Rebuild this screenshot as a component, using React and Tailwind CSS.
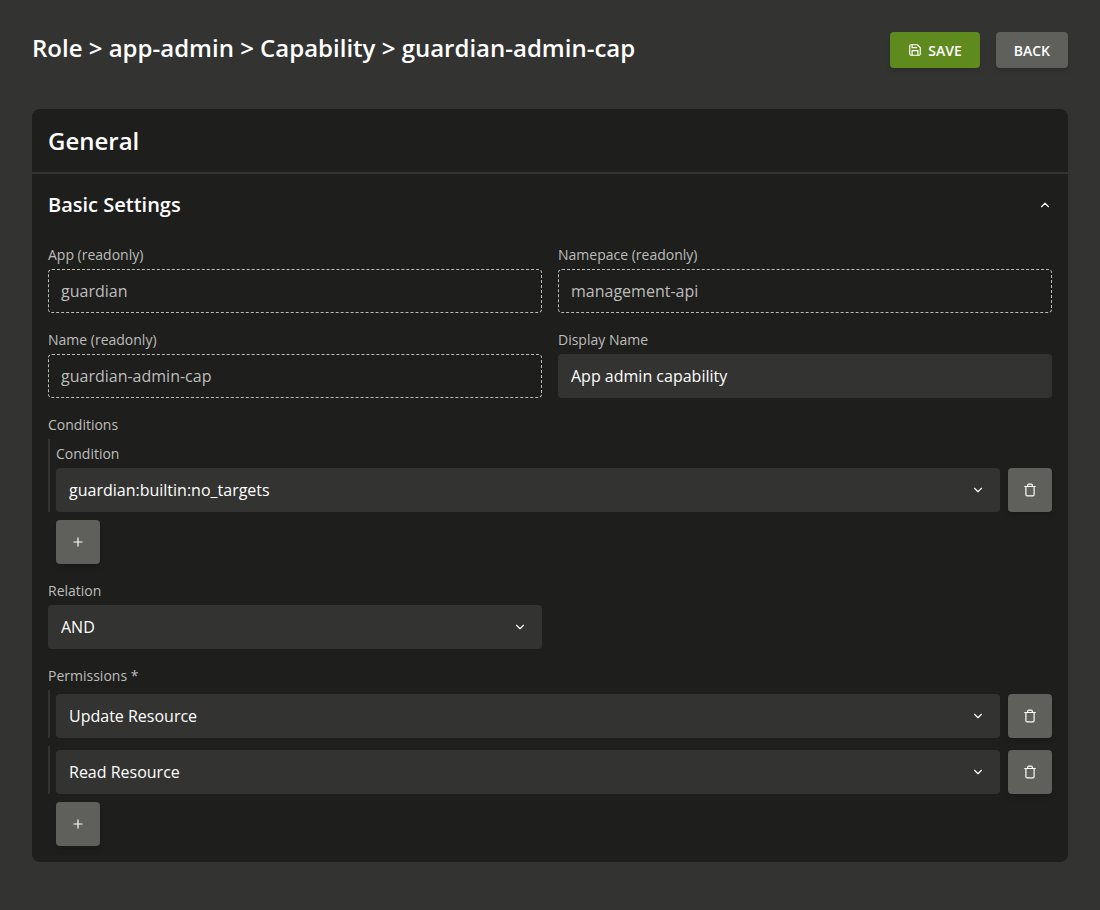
import React, { useState } from 'react';

function Icon({ children, className = '' }) {
  return (
    <svg
      viewBox="0 0 24 24"
      fill="none"
      stroke="currentColor"
      strokeWidth="2"
      strokeLinecap="round"
      strokeLinejoin="round"
      aria-hidden="true"
      className={`size-3.5 shrink-0 ${className}`}
    >
      {children}
    </svg>
  );
}

const SaveIcon = () => (
  <Icon>
    <path d="M19 21H5a2 2 0 0 1-2-2V5a2 2 0 0 1 2-2h11l5 5v11a2 2 0 0 1-2 2z" />
    <polyline points="17 21 17 13 7 13 7 21" />
    <polyline points="7 3 7 8 15 8" />
  </Icon>
);

const TrashIcon = () => (
  <Icon>
    <polyline points="3 6 5 6 21 6" />
    <path d="M19 6v14a2 2 0 0 1-2 2H7a2 2 0 0 1-2-2V6m3 0V4a2 2 0 0 1 2-2h4a2 2 0 0 1 2 2v2" />
  </Icon>
);

const PlusIcon = () => (
  <Icon>
    <line x1="12" y1="5" x2="12" y2="19" />
    <line x1="5" y1="12" x2="19" y2="12" />
  </Icon>
);

const labelClass = 'text-sm leading-[21px] text-[#bdbdbb]';

function TextField({ id, label, value, readOnly = false }) {
  return (
    <div className="flex min-w-0 flex-col gap-1">
      <label htmlFor={id} className={labelClass}>{label}</label>
      <input
        id={id}
        type="text"
        defaultValue={value}
        readOnly={readOnly}
        className={
          readOnly
            ? 'h-11 w-full rounded border border-dashed border-[#bdbdbb] bg-transparent px-3 text-base text-[#bdbdbb] outline-none'
            : 'h-11 w-full rounded border border-transparent bg-[#333331] px-3 text-base text-white outline-none'
        }
      />
    </div>
  );
}

function SelectBox({ id, value, options, ariaLabel }) {
  return (
    <div className="relative w-full min-w-0">
      <select
        id={id}
        defaultValue={value}
        aria-label={ariaLabel}
        className="h-11 w-full appearance-none rounded border border-transparent bg-[#333331] pr-10 pl-3 text-base text-white outline-none"
      >
        {options.map((option) => (
          <option key={option}>{option}</option>
        ))}
      </select>
      <span className="pointer-events-none absolute inset-y-0 right-[15px] flex items-center text-white">
        <Icon>
          <polyline points="6 9 12 15 18 9" />
        </Icon>
      </span>
    </div>
  );
}

function SquareButton({ label, children }) {
  return (
    <button
      type="button"
      aria-label={label}
      className="flex size-11 shrink-0 items-center justify-center rounded bg-[#5f605b] text-white shadow-md"
    >
      {children}
    </button>
  );
}

function EntryRow({ id, label, ...select }) {
  return (
    <div className="flex flex-col gap-1 border-l-2 border-[#333331] pt-1 pl-1.5">
      {label && <label htmlFor={id} className={labelClass}>{label}</label>}
      <div className="flex gap-2">
        <SelectBox id={id} {...select} />
        <SquareButton label="Remove entry"><TrashIcon /></SquareButton>
      </div>
    </div>
  );
}

function EntryGroup({ title, addLabel, children }) {
  return (
    <fieldset className="min-w-0">
      <legend className={`mb-1 ${labelClass}`}>{title}</legend>
      <div className="flex flex-col gap-2">
        {children}
        <div className="pl-2">
          <SquareButton label={addLabel}><PlusIcon /></SquareButton>
        </div>
      </div>
    </fieldset>
  );
}

const permissions = ['Update Resource', 'Read Resource'];
const actionClass =
  'flex h-9 items-center gap-1.5 rounded px-[18px] text-sm leading-[21px] font-semibold text-white uppercase shadow-md';

export default function App() {
  const [open, setOpen] = useState(true);

  return (
    <div className="min-h-screen bg-[#333331] p-8 pb-12 font-['Open_Sans',sans-serif] text-white">
      <header className="flex items-start justify-between gap-4 pb-[41px]">
        <h1 className="text-2xl leading-[31px] font-semibold">
          Role &gt; app-admin &gt; Capability &gt; guardian-admin-cap
        </h1>
        <div className="flex gap-4">
          <button type="button" className={`${actionClass} bg-[#5f8a1e]`}>
            <SaveIcon />
            Save
          </button>
          <button type="button" className={`${actionClass} bg-[#5f605b]`}>Back</button>
        </div>
      </header>

      <main className="rounded-lg bg-[#1e1e1d]">
        <h2 className="border-b-2 border-[#333331] p-4 text-2xl leading-[31px] font-semibold">General</h2>
        <section className="p-4">
          <h3>
            <button
              type="button"
              aria-expanded={open}
              onClick={() => setOpen(!open)}
              className="flex w-full items-center justify-between text-left text-xl leading-[30px] font-semibold"
            >
              Basic Settings
              <Icon className={open ? '' : 'rotate-180'}>
                <polyline points="18 15 12 9 6 15" />
              </Icon>
            </button>
          </h3>
          {open && (
            <form className="flex flex-col gap-4 pt-6">
              <div className="grid grid-cols-2 gap-4">
                <TextField id="app" label="App (readonly)" value="guardian" readOnly />
                <TextField id="namespace" label="Namepace (readonly)" value="management-api" readOnly />
                <TextField id="name" label="Name (readonly)" value="guardian-admin-cap" readOnly />
                <TextField id="display-name" label="Display Name" value="App admin capability" />
              </div>

              <EntryGroup title="Conditions" addLabel="Add condition">
                <EntryRow
                  id="condition"
                  label="Condition"
                  value="guardian:builtin:no_targets"
                  options={['guardian:builtin:no_targets']}
                />
              </EntryGroup>

              <div className="grid grid-cols-2 gap-4">
                <div className="flex flex-col gap-1">
                  <label htmlFor="relation" className={labelClass}>Relation</label>
                  <SelectBox id="relation" value="AND" options={['AND', 'OR']} />
                </div>
              </div>

              <EntryGroup title="Permissions *" addLabel="Add permission">
                {permissions.map((permission, index) => (
                  <EntryRow
                    key={permission}
                    id={`permission-${index}`}
                    value={permission}
                    options={permissions}
                    ariaLabel={`Permission ${index + 1}`}
                  />
                ))}
              </EntryGroup>
            </form>
          )}
        </section>
      </main>
    </div>
  );
}
